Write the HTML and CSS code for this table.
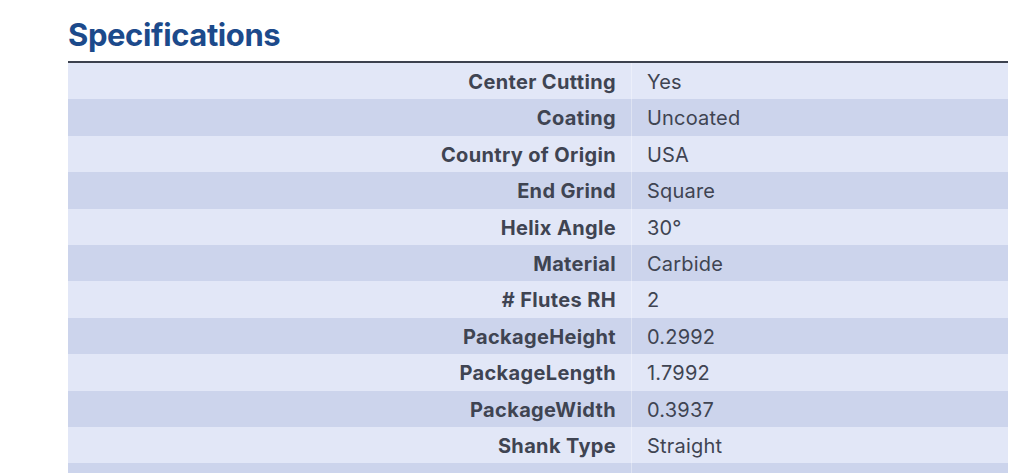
FILE: index.html
```html
<!DOCTYPE html>
<html lang="en">
<head>
<meta charset="utf-8">
<title>Specifications</title>
<link rel="stylesheet" href="styles.css">
</head>
<body>
<section class="specs">
  <h2 class="specs-title">Specifications</h2>
  <table class="specs-table">
    <tbody>
      <tr><th>Center Cutting</th><td>Yes</td></tr>
      <tr><th>Coating</th><td>Uncoated</td></tr>
      <tr><th>Country of Origin</th><td>USA</td></tr>
      <tr><th>End Grind</th><td>Square</td></tr>
      <tr><th>Helix Angle</th><td>30°</td></tr>
      <tr><th>Material</th><td>Carbide</td></tr>
      <tr><th># Flutes RH</th><td>2</td></tr>
      <tr><th>PackageHeight</th><td>0.2992</td></tr>
      <tr><th>PackageLength</th><td>1.7992</td></tr>
      <tr><th>PackageWidth</th><td>0.3937</td></tr>
      <tr><th>Shank Type</th><td>Straight</td></tr>
      <tr class="specs-more"><th></th><td></td></tr>
    </tbody>
  </table>
</section>
</body>
</html>
```
FILE: styles.css
```css
html, body {
  margin: 0;
  padding: 0;
  background: #ffffff;
  overflow: hidden;
}
body {
  font-family: Inter, Lato, Arial, sans-serif;
  color: #3f4452;
}
.specs {
  padding: 15px 16px 0 68px;
}
.specs-title {
  margin: 0;
  font-size: 31px;
  line-height: 40px;
  font-weight: 700;
  color: #1c4a8b;
  height: 46px;
  letter-spacing: -0.4px;
}
.specs-table {
  width: 940px;
  border-collapse: separate;
  border-spacing: 0;
  border-top: 2px solid #3d424f;
}
.specs-table tr:nth-child(odd) {
  background: #e2e7f7;
}
.specs-table tr:nth-child(even) {
  background: #ccd4ec;
}
.specs-table th,
.specs-table td {
  padding: 7px 15px 5px;
  font-size: 20px;
  line-height: 24.4px;
  height: 24.4px;
  vertical-align: middle;
}
.specs-table th {
  width: 60%;
  text-align: right;
  font-weight: 700;
  letter-spacing: 0.35px;
  border-right: 1px solid rgba(255, 255, 255, 0.35);
}
.specs-table td {
  text-align: left;
  font-weight: 400;
  letter-spacing: 0.2px;
}
```
